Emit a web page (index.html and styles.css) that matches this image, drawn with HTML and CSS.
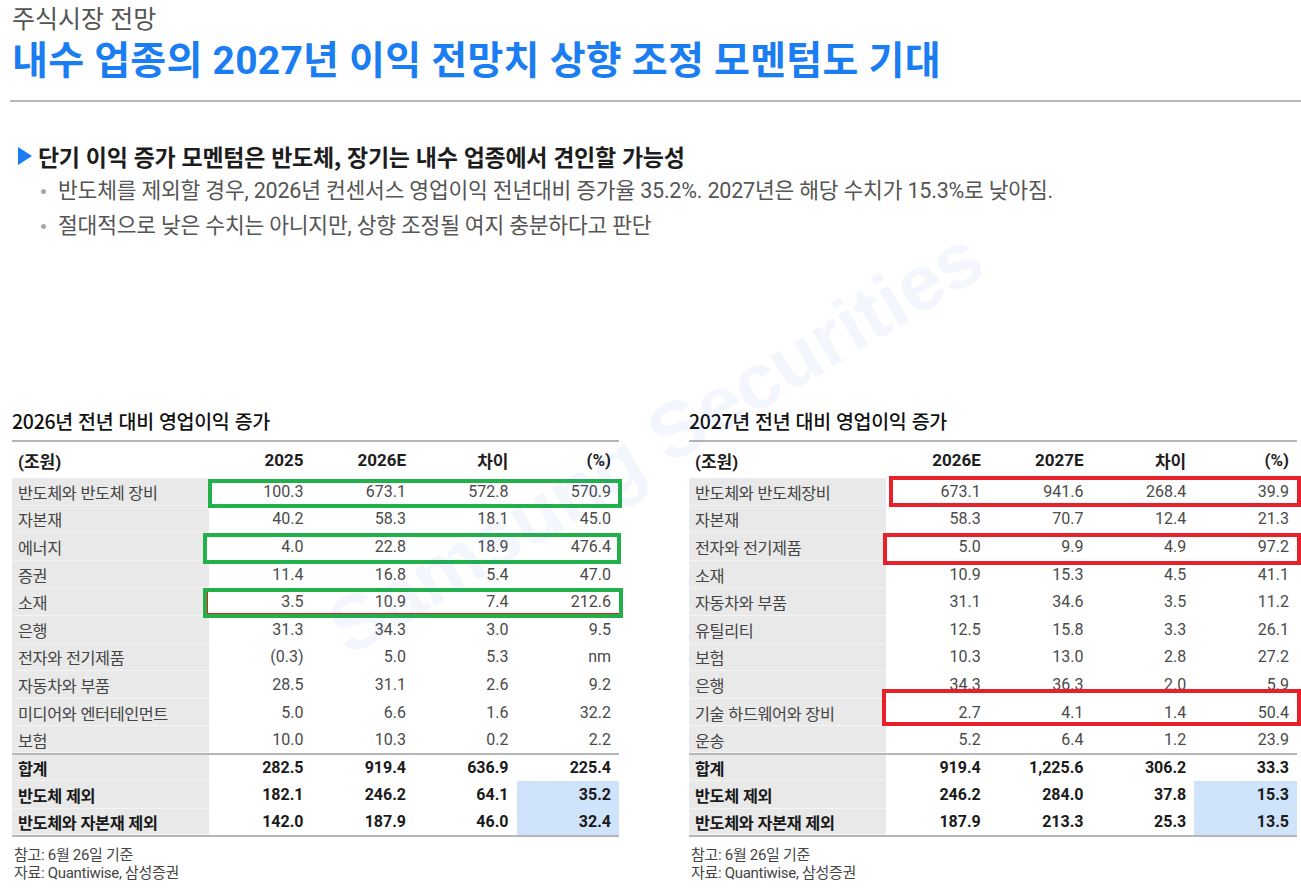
FILE: index.html
```html
<!DOCTYPE html>
<html lang="ko">
<head>
<meta charset="utf-8">
<title>주식시장 전망</title>
<link rel="stylesheet" href="styles.css">
</head>
<body>
<div class="page">
  <header class="top">
    <div class="kicker">주식시장 전망</div>
    <h1 class="title">내수 업종의 2027년 이익 전망치 상향 조정 모멘텀도 기대</h1>
    <div class="rule"></div>
  </header>

  <section class="summary">
    <h2 class="lead"><span class="tri"></span>단기 이익 증가 모멘텀은 반도체, 장기는 내수 업종에서 견인할 가능성</h2>
    <ul class="bullets">
      <li>반도체를 제외할 경우, 2026년 컨센서스 영업이익 전년대비 증가율 35.2%. 2027년은 해당 수치가 15.3%로 낮아짐.</li>
      <li>절대적으로 낮은 수치는 아니지만, 상향 조정될 여지 충분하다고 판단</li>
    </ul>
  </section>

  <section class="tables">
    <div class="panel left">
      <h3 class="ptitle">2026년 전년 대비 영업이익 증가</h3>
      <div class="tblwrap">
        <table class="tbl">
          <colgroup><col class="c-lab"><col><col><col><col></colgroup>
          <thead>
            <tr><th class="lab">(조원)</th><th>2025</th><th>2026E</th><th>차이</th><th>(%)</th></tr>
          </thead>
          <tbody class="data">
            <tr class="hl"><td class="lab">반도체와 반도체 장비</td><td>100.3</td><td>673.1</td><td>572.8</td><td>570.9</td></tr>
            <tr><td class="lab">자본재</td><td>40.2</td><td>58.3</td><td>18.1</td><td>45.0</td></tr>
            <tr class="hl"><td class="lab">에너지</td><td>4.0</td><td>22.8</td><td>18.9</td><td>476.4</td></tr>
            <tr><td class="lab">증권</td><td>11.4</td><td>16.8</td><td>5.4</td><td>47.0</td></tr>
            <tr class="hl"><td class="lab">소재</td><td>3.5</td><td>10.9</td><td>7.4</td><td>212.6</td></tr>
            <tr><td class="lab">은행</td><td>31.3</td><td>34.3</td><td>3.0</td><td>9.5</td></tr>
            <tr><td class="lab">전자와 전기제품</td><td>(0.3)</td><td>5.0</td><td>5.3</td><td>nm</td></tr>
            <tr><td class="lab">자동차와 부품</td><td>28.5</td><td>31.1</td><td>2.6</td><td>9.2</td></tr>
            <tr><td class="lab">미디어와 엔터테인먼트</td><td>5.0</td><td>6.6</td><td>1.6</td><td>32.2</td></tr>
            <tr><td class="lab">보험</td><td>10.0</td><td>10.3</td><td>0.2</td><td>2.2</td></tr>
          </tbody>
          <tbody class="sum">
            <tr><td class="lab">합계</td><td>282.5</td><td>919.4</td><td>636.9</td><td>225.4</td></tr>
            <tr><td class="lab">반도체 제외</td><td>182.1</td><td>246.2</td><td>64.1</td><td class="blue">35.2</td></tr>
            <tr><td class="lab">반도체와 자본재 제외</td><td>142.0</td><td>187.9</td><td>46.0</td><td class="blue">32.4</td></tr>
          </tbody>
        </table>
        <div class="box green g1"></div>
        <div class="box green g2"></div>
        <div class="box green g3"></div>
      </div>
      <div class="notes">
        <p>참고: 6월 26일 기준</p>
        <p>자료: Quantiwise, 삼성증권</p>
      </div>
    </div>

    <div class="panel right">
      <h3 class="ptitle">2027년 전년 대비 영업이익 증가</h3>
      <div class="tblwrap">
        <table class="tbl">
          <colgroup><col class="c-lab"><col><col><col><col></colgroup>
          <thead>
            <tr><th class="lab">(조원)</th><th>2026E</th><th>2027E</th><th>차이</th><th>(%)</th></tr>
          </thead>
          <tbody class="data">
            <tr class="hl"><td class="lab">반도체와 반도체장비</td><td>673.1</td><td>941.6</td><td>268.4</td><td>39.9</td></tr>
            <tr><td class="lab">자본재</td><td>58.3</td><td>70.7</td><td>12.4</td><td>21.3</td></tr>
            <tr class="hl"><td class="lab">전자와 전기제품</td><td>5.0</td><td>9.9</td><td>4.9</td><td>97.2</td></tr>
            <tr><td class="lab">소재</td><td>10.9</td><td>15.3</td><td>4.5</td><td>41.1</td></tr>
            <tr><td class="lab">자동차와 부품</td><td>31.1</td><td>34.6</td><td>3.5</td><td>11.2</td></tr>
            <tr><td class="lab">유틸리티</td><td>12.5</td><td>15.8</td><td>3.3</td><td>26.1</td></tr>
            <tr><td class="lab">보험</td><td>10.3</td><td>13.0</td><td>2.8</td><td>27.2</td></tr>
            <tr><td class="lab">은행</td><td>34.3</td><td>36.3</td><td>2.0</td><td>5.9</td></tr>
            <tr class="hl"><td class="lab">기술 하드웨어와 장비</td><td>2.7</td><td>4.1</td><td>1.4</td><td>50.4</td></tr>
            <tr><td class="lab">운송</td><td>5.2</td><td>6.4</td><td>1.2</td><td>23.9</td></tr>
          </tbody>
          <tbody class="sum">
            <tr><td class="lab">합계</td><td>919.4</td><td>1,225.6</td><td>306.2</td><td>33.3</td></tr>
            <tr><td class="lab">반도체 제외</td><td>246.2</td><td>284.0</td><td>37.8</td><td class="blue">15.3</td></tr>
            <tr><td class="lab">반도체와 자본재 제외</td><td>187.9</td><td>213.3</td><td>25.3</td><td class="blue">13.5</td></tr>
          </tbody>
        </table>
        <div class="box red r1"></div>
        <div class="box red r2"></div>
        <div class="box red r3"></div>
      </div>
      <div class="notes">
        <p>참고: 6월 26일 기준</p>
        <p>자료: Quantiwise, 삼성증권</p>
      </div>
    </div>
  </section>

  <div class="watermark">Samsung Securities</div>
</div>
</body>
</html>
```

FILE: styles.css
```css
* { box-sizing: border-box; margin: 0; padding: 0; }
html, body { background: #ffffff; }
body {
  width: 1301px;
  height: 889px;
  overflow: hidden;
  font-family: "Noto Sans CJK KR", "Noto Sans", sans-serif;
  color: #333;
}
.page { position: relative; height: 889px; padding: 5px 0 0 12px; }

/* header */
.kicker {
  font-family: Roboto, "Noto Sans CJK KR", sans-serif;
  font-size: 25px;
  line-height: 30px;
  color: #555;
  font-weight: 400;
}
.title {
  margin-top: 3px;
  font-family: Roboto, "Noto Sans CJK KR", sans-serif;
  font-size: 39px;
  line-height: 47px;
  font-weight: 700;
  color: #1a7ef2;
  letter-spacing: 0.25px;
}
.rule { height: 2px; background: #b9b9b9; margin: 15px 0 0 -2px; }

/* summary */
.summary { margin-top: 39px; }
.lead {
  display: flex;
  align-items: center;
  font-size: 23px;
  line-height: 30px;
  font-weight: 700;
  color: #1d1d1d;
  padding-left: 6px;
  letter-spacing: -0.3px;
}
.tri {
  width: 0; height: 0;
  border-top: 9px solid transparent;
  border-bottom: 9px solid transparent;
  border-left: 14px solid #1a7ef2;
  margin-right: 6px;
}
.bullets { list-style: none; margin-top: 2px; }
.bullets li {
  position: relative;
  padding-left: 46px;
  font-family: Roboto, "Noto Sans CJK KR", sans-serif;
  font-size: 21.5px;
  line-height: 35px;
  color: #555;
  letter-spacing: -0.2px;
}
.bullets li::before {
  content: "";
  position: absolute;
  left: 29px;
  top: 16px;
  width: 5px; height: 5px;
  border-radius: 50%;
  background: #a8a8a8;
}

/* tables */
.tables { display: flex; gap: 70px; margin-top: 165px; }
.panel { width: 607px; }
.panel.right { width: 608px; }
.ptitle {
  font-size: 19.5px;
  line-height: 26px;
  font-weight: 500;
  color: #111;
  letter-spacing: -0.3px;
}
.tblwrap { position: relative; margin-top: 6px; border-top: 2px solid #b6b6b6; }
.tbl {
  width: 100%;
  border-collapse: collapse;
  table-layout: fixed;
  font-family: Roboto, "Noto Sans CJK KR", sans-serif;
}
.tbl col.c-lab { width: 197px; }
.tbl th {
  height: 36px;
  font-size: 17px;
  font-weight: 700;
  color: #1d1d1d;
  text-align: right;
  padding-right: 8px;
  vertical-align: middle;
}
.tbl .data tr { height: 27.6px; }
.tbl td {
  font-size: 16px;
  line-height: 20px;
  padding-top: 0;
  padding-bottom: 0;
  color: #4a4a4a;
  text-align: right;
  padding-right: 8px;
  vertical-align: middle;
  white-space: nowrap;
}
.tbl .lab {
  text-align: left;
  padding-left: 6px;
  padding-right: 0;
}
.tbl td.lab {
  background: #e9e9e9;
  font-family: "Noto Sans CJK KR", sans-serif;
  font-size: 16.3px;
  color: #444;
  letter-spacing: -0.4px;
  box-shadow: inset 0 -1px 0 #f4f4f4;
}
.tbl .sum tr { height: 27.5px; }
.tbl .sum td { font-weight: 700; color: #1a1a1a; }
.tbl .sum td.lab { color: #1a1a1a; }
.tbl .sum tr:first-child td { border-top: 2px solid #b6b6b6; }
.tbl .sum tr:last-child td { border-bottom: 2px solid #b6b6b6; }
.tbl td.blue { background: #cfe3fb; }

/* highlighted rows sit above the white box fill */
.tbl tr.hl td:not(.lab) { position: relative; z-index: 2; }

.box {
  position: absolute;
  z-index: 1;
  background: #fff;
  border: 4px solid;
}
.box.green { border-color: #22b04b; }
.box.red { border-color: #e8202a; }
.g1 { left: 196px; top: 37px; width: 414px; height: 29px; }
.g2 { left: 191px; top: 91px; width: 418px; height: 31px; }
.g3 { left: 191px; top: 146px; width: 420px; height: 30px; box-shadow: inset 1px -1px 0 #e02020; }
.r1 { left: 200px; top: 34px; width: 412px; height: 31px; }
.r2 { left: 194px; top: 91px; width: 418px; height: 32px; }
.r3 { left: 193px; top: 247px; width: 419px; height: 37px; }

.notes { margin-top: 8.5px; padding-left: 2px; }
.notes p {
  font-family: Roboto, "Noto Sans CJK KR", sans-serif;
  font-size: 15px;
  line-height: 18px;
  color: #444;
  letter-spacing: -0.3px;
}

/* watermark */
.watermark {
  position: absolute;
  left: 280px;
  top: 402px;
  width: 750px;
  text-align: center;
  font-family: "Liberation Sans", Arial, sans-serif;
  font-weight: 700;
  font-size: 78px;
  line-height: 80px;
  color: rgba(60, 100, 235, 0.06);
  transform: rotate(-31deg);
  white-space: nowrap;
  pointer-events: none;
  z-index: 5;
}
```
